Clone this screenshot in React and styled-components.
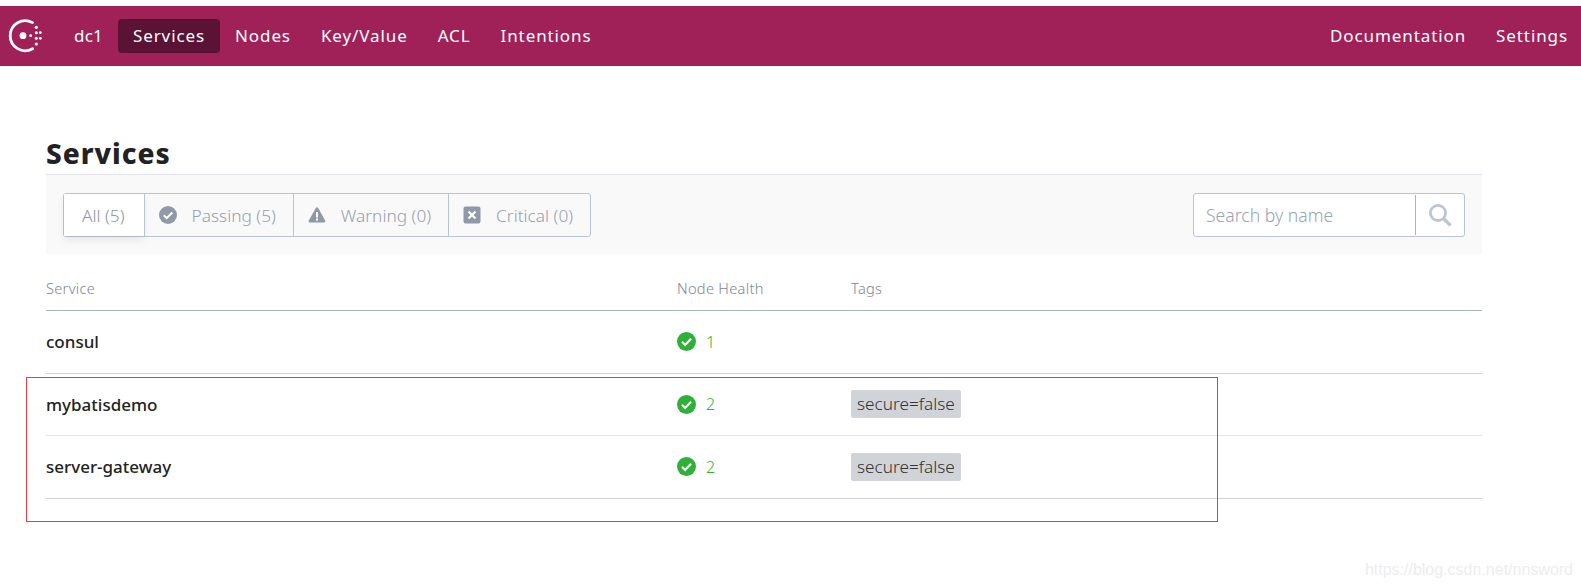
import React from "react";
import styled, { createGlobalStyle } from "styled-components";

const GlobalStyle = createGlobalStyle`
  html, body {
    margin: 0;
    padding: 0;
    background: #fff;
  }
  body {
    font-family: "Noto Sans", "Open Sans", sans-serif;
    overflow: hidden;
  }
`;

const Page = styled.div`
  position: relative;
  width: 1581px;
  height: 588px;
  padding-top: 6px;
  box-sizing: border-box;
`;

const Header = styled.header`
  height: 60px;
  background: #a02158;
  display: flex;
  align-items: center;
  justify-content: space-between;
  padding: 0 0 0 7px;
  color: #fff;
`;

const NavGroup = styled.nav`
  display: flex;
  align-items: center;
  margin-right: ${(p) => p.$end || 0}px;
`;

const Logo = styled.svg`
  width: 36px;
  height: 34px;
  margin-right: 16px;
`;

const NavItem = styled.a`
  display: block;
  height: 34px;
  line-height: 34px;
  padding: 0 15px;
  border-radius: 4px;
  font-size: 17px;
  letter-spacing: 0.9px;
  white-space: nowrap;
  color: #fff;
  background: ${(p) => (p.$active ? "#5a1335" : "transparent")};
`;

const DatacenterItem = styled(NavItem)`
  letter-spacing: 0.2px;
`;

const Main = styled.main`
  width: 1436px;
  margin-left: 46px;
`;

const Title = styled.h1`
  margin: 65px 0 0;
  height: 43px;
  line-height: 45px;
  font-size: 28px;
  font-weight: 800;
  letter-spacing: 1px;
  color: #222;
`;

const Toolbar = styled.div`
  height: 80px;
  background: #f9f9fa;
  border-top: 1px solid #e4e4ee;
  display: flex;
  align-items: flex-start;
  justify-content: space-between;
  padding: 18px 17px 0 17px;
  box-sizing: border-box;
`;

const FilterGroup = styled.div`
  display: flex;
  height: 44px;
  box-sizing: border-box;
  border: 1px solid #bac4d3;
  border-radius: 3px;
`;

const FilterItem = styled.div`
  display: flex;
  align-items: center;
  gap: 15px;
  padding: 0 17px 0 14px;
  font-size: 17.3px;
  font-weight: 300;
  color: #97a0ae;
  white-space: nowrap;
  border-left: 1px solid #bac4d3;
`;

const ActiveFilter = styled(FilterItem)`
  padding: 0 19px 0 18px;
  border-left: none;
  background: #fff;
  color: #8d95a3;
  box-shadow: 0 4px 8px rgba(0, 0, 0, 0.08);
`;

const SearchBox = styled.div`
  display: flex;
  width: 272px;
  height: 44px;
  box-sizing: border-box;
  background: #fff;
  border: 1px solid #bac4d3;
  border-radius: 3px;
`;

const SearchText = styled.div`
  flex: 1;
  margin: 1px 0;
  padding-left: 12px;
  line-height: 40px;
  font-size: 17.6px;
  font-weight: 300;
  color: #9aa3b1;
  border-right: 1px solid #a9b3c2;
`;

const SearchButton = styled.div`
  width: 48px;
  display: flex;
  align-items: center;
  justify-content: center;
`;

const Row = styled.div`
  display: grid;
  grid-template-columns: 631px 174px 1fr;
  align-items: center;
  height: 62.6px;
  box-sizing: border-box;
  border-bottom: 1px solid ${(p) => p.$line};
`;

const HeadRow = styled(Row)`
  height: 57px;
  align-items: end;
  padding-bottom: 12px;
`;

const HeadCell = styled.div`
  font-size: 14.6px;
  font-weight: 300;
  letter-spacing: 0.3px;
  color: #7d8694;
`;

const ServiceName = styled.div`
  font-size: 17px;
  font-weight: 500;
  color: #222;
`;

const Health = styled.div`
  display: flex;
  align-items: center;
  gap: 10px;
  font-size: 16px;
  font-weight: 300;
  color: #2eb039;
`;

const Tag = styled.span`
  display: inline-block;
  height: 28px;
  line-height: 28px;
  padding: 0 6px;
  border-radius: 2px;
  background: #d0d4d9;
  font-size: 17.2px;
  font-weight: 300;
  color: #333;
`;

const Callout = styled.div`
  position: absolute;
  left: 26px;
  top: 377px;
  width: 1192px;
  height: 145px;
  box-sizing: border-box;
  border: 1px solid #ee3a3f;
  pointer-events: none;
`;

const Watermark = styled.div`
  position: absolute;
  right: 8px;
  top: 561px;
  font-family: "Liberation Sans", sans-serif;
  font-size: 16px;
  color: #ededed;
`;

const ConsulLogo = () => (
  <Logo viewBox="0 0 36 34">
    <path
      d="M25.5 3.6A15 15 0 1 0 25.5 29.8"
      fill="none"
      stroke="#fff"
      strokeWidth="2.8"
      strokeLinecap="round"
    />
    <g fill="#fff">
      <circle cx="16" cy="16.7" r="3.4" />
      <circle cx="23.7" cy="16.7" r="1.4" />
      <circle cx="29.3" cy="8.3" r="1.6" />
      <circle cx="29.3" cy="13.7" r="1.5" />
      <circle cx="29.3" cy="19.3" r="1.5" />
      <circle cx="29.3" cy="25" r="1.6" />
      <circle cx="33.3" cy="13.7" r="1.4" />
      <circle cx="33.3" cy="19.3" r="1.4" />
    </g>
  </Logo>
);

const CheckCircle = ({ color, size = 18 }) => (
  <svg width={size} height={size} viewBox="0 0 18 18">
    <circle cx="9" cy="9" r="9" fill={color} />
    <path
      d="M4.8 9.3l2.9 2.9 5.6-5.7"
      fill="none"
      stroke="#fff"
      strokeWidth="2"
    />
  </svg>
);

const WarningIcon = () => (
  <svg width="18" height="18" viewBox="0 0 18 18">
    <path
      d="M9 1.2c.5 0 .9.3 1.2.8l7 12.6c.5.9-.1 1.9-1.1 1.9H1.9c-1 0-1.6-1-1.1-1.9l7-12.6c.3-.5.7-.8 1.2-.8z"
      fill="#8f99a8"
    />
    <rect x="8" y="6" width="2" height="5.5" fill="#fff" />
    <rect x="8" y="12.6" width="2" height="2" fill="#fff" />
  </svg>
);

const CriticalIcon = () => (
  <svg width="18" height="18" viewBox="0 0 18 18">
    <rect x="0.5" y="0.5" width="17" height="17" rx="2" fill="#8f99a8" />
    <path d="M5.5 5.5l7 7M12.5 5.5l-7 7" stroke="#fff" strokeWidth="2.2" />
  </svg>
);

const SearchIcon = () => (
  <svg width="24" height="24" viewBox="0 0 24 24">
    <circle cx="10" cy="10" r="7.6" fill="none" stroke="#bcc5d2" strokeWidth="2.8" />
    <path d="M15.5 15.5l7 7" stroke="#bcc5d2" strokeWidth="3.2" />
  </svg>
);

const services = [
  { name: "consul", count: 1, line: "#d0d3d6" },
  { name: "mybatisdemo", count: 2, tag: "secure=false", line: "#e3e6ea" },
  { name: "server-gateway", count: 2, tag: "secure=false", line: "#d0d3d6" },
];

export default function App() {
  return (
    <Page>
      <GlobalStyle />
      <Header>
        <NavGroup>
          <ConsulLogo />
          <DatacenterItem>dc1</DatacenterItem>
          <NavItem $active>Services</NavItem>
          <NavItem>Nodes</NavItem>
          <NavItem>Key/Value</NavItem>
          <NavItem>ACL</NavItem>
          <NavItem>Intentions</NavItem>
        </NavGroup>
        <NavGroup $end={-2}>
          <NavItem>Documentation</NavItem>
          <NavItem>Settings</NavItem>
        </NavGroup>
      </Header>
      <Main>
        <Title>Services</Title>
        <Toolbar>
          <FilterGroup>
            <ActiveFilter>All (5)</ActiveFilter>
            <FilterItem>
              <CheckCircle color="#8f99a8" />
              Passing (5)
            </FilterItem>
            <FilterItem>
              <WarningIcon />
              Warning (0)
            </FilterItem>
            <FilterItem>
              <CriticalIcon />
              Critical (0)
            </FilterItem>
          </FilterGroup>
          <SearchBox>
            <SearchText>Search by name</SearchText>
            <SearchButton>
              <SearchIcon />
            </SearchButton>
          </SearchBox>
        </Toolbar>
        <HeadRow $line="#a9b1b8">
          <HeadCell>Service</HeadCell>
          <HeadCell>Node Health</HeadCell>
          <HeadCell>Tags</HeadCell>
        </HeadRow>
        {services.map((s) => (
          <Row key={s.name} $line={s.line}>
            <ServiceName>{s.name}</ServiceName>
            <Health>
              <CheckCircle color="#2eb039" size={19} />
              {s.count}
            </Health>
            <div>{s.tag && <Tag>{s.tag}</Tag>}</div>
          </Row>
        ))}
      </Main>
      <Callout />
      <Watermark>https://blog.csdn.net/nnsword</Watermark>
    </Page>
  );
}
